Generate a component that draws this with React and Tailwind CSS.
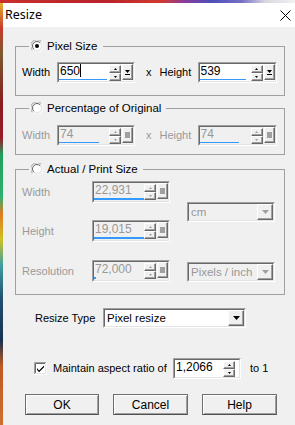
import React from "react";

const raised =
  "bg-[#f0f0f0] border border-t-white border-l-white border-r-[#696969] border-b-[#696969] shadow-[inset_-1px_-1px_0_#a0a0a0]";

function TriDown({ color = "#000", w = 5 }) {
  const h = Math.ceil(w / 2);
  return (
    <svg width={w} height={h} viewBox={`0 0 ${w} ${h}`}>
      <polygon points={`0,0 ${w},0 ${w / 2},${h}`} fill={color} />
    </svg>
  );
}
function TriUp({ color = "#000", w = 5 }) {
  const h = Math.ceil(w / 2);
  return (
    <svg width={w} height={h} viewBox={`0 0 ${w} ${h}`}>
      <polygon points={`0,${h} ${w},${h} ${w / 2},0`} fill={color} />
    </svg>
  );
}

function Spin({ wCls, hCls = "h-[21px]", value, disabled, blueCls, third = true, spinRight = "" }) {
  const tc = disabled ? "text-[#989898]" : "text-black";
  const ac = disabled ? "#a0a0a0" : "#000";
  return (
    <div className={`${wCls} ${hCls} shrink-0 flex border border-t-[#a0a0a0] border-l-[#a0a0a0] border-r-white border-b-white`}>
      <div
        className={`flex-1 flex border border-t-[#696969] border-l-[#696969] border-r-[#e3e3e3] border-b-[#e3e3e3] ${
          disabled ? "bg-[#f0f0f0]" : "bg-white"
        }`}
      >
        <div className="flex-1 flex flex-col min-w-0">
          <div className={`flex-1 pl-[1px] text-[12px] leading-[15px] whitespace-nowrap ${tc}`}>{value}</div>
          <div className={`${blueCls} h-[2px] bg-[#3399ff] mb-[1px]`} />
        </div>
        <div className={`w-[12px] flex flex-col pt-[1px] ${spinRight}`}>
          <div className={`${raised} h-[8px] flex items-center justify-center`}>
            <TriUp color={ac} w={3} />
          </div>
          <div className={`${raised} h-[8px] flex items-center justify-center`}>
            <TriDown color={ac} w={3} />
          </div>
        </div>
        {third && (
          <div className={`${raised} w-[11px] h-[16px] ml-[1px] flex flex-col items-center justify-center gap-[1px]`}>
            {disabled ? (
              <div className="w-[5px] h-[6px] bg-[#a0a0a0]" />
            ) : (
              <>
                <TriDown color="#000" w={5} />
                <div className="w-[5px] h-[1px] bg-black" />
              </>
            )}
          </div>
        )}
      </div>
    </div>
  );
}

function Drop({ wCls, value, disabled }) {
  return (
    <div className={`${wCls} h-[20px] shrink-0 flex border border-t-[#a0a0a0] border-l-[#a0a0a0] border-r-white border-b-white`}>
      <div
        className={`flex-1 flex items-center border border-t-[#696969] border-l-[#696969] border-r-[#e3e3e3] border-b-[#e3e3e3] ${
          disabled ? "bg-[#f0f0f0]" : "bg-white"
        }`}
      >
        <span className={`flex-1 pl-[2px] text-[11.5px] leading-[14px] whitespace-nowrap overflow-hidden ${disabled ? "text-[#989898]" : "text-black"}`}>
          {value}
        </span>
        <div className={`${raised} w-[16px] h-[16px] shrink-0 flex items-center justify-center`}>
          <TriDown color={disabled ? "#a0a0a0" : "#000"} w={7} />
        </div>
      </div>
    </div>
  );
}

function Radio({ checked }) {
  return (
    <svg width="12" height="12" viewBox="0 0 12 12" className="shrink-0">
      <path d="M10.5 1.5 A6 6 0 0 0 1.5 10.5" stroke="#a0a0a0" fill="none" />
      <path d="M1.5 10.5 A6 6 0 0 0 10.5 1.5" stroke="#ffffff" fill="none" />
      <circle cx="6" cy="6" r="4.5" fill="#fff" stroke="#e3e3e3" />
      <path d="M9.2 2.8 A4.5 4.5 0 0 0 2.8 9.2" stroke="#696969" fill="none" />
      {checked && <circle cx="6" cy="6" r="2" fill="#000" />}
    </svg>
  );
}

function Group({ label, checked, mtCls, padCls, children }) {
  return (
    <fieldset className={`${mtCls} border border-[#a0a0a0] ${padCls} min-w-0`}>
      <legend className="ml-[7px] pl-[2px] pr-[5px] leading-[14px]">
        <span className="inline-flex items-center h-[14px] gap-[4px] text-[11.5px] text-black align-top whitespace-nowrap">
          <Radio checked={checked} />
          <span>{label}</span>
        </span>
      </legend>
      {children}
    </fieldset>
  );
}

function Btn({ children, wCls }) {
  return (
    <div
      className={`${wCls} h-[21px] flex items-center justify-center bg-[#f0f0f0] border border-[#6d6d6d] border-b-[#505050] shadow-[inset_1px_1px_0_#fff,inset_-1px_-1px_0_#a0a0a0] text-[12px] text-black`}
    >
      {children}
    </div>
  );
}

export default function App() {
  const lbl = "text-[11px] whitespace-nowrap shrink-0";
  const dis = "text-[#9a9a9a]";
  return (
    <div className="w-[295px] h-[425px] flex flex-col overflow-hidden font-['Liberation_Sans',Arial,sans-serif] select-none">
      <div className="h-[3px] shrink-0 bg-[linear-gradient(90deg,#c9302c_0%,#b8222a_35%,#d23a30_55%,#8d3b9a_62%,#4c4fb8_72%,#7a6fc8_82%,#d8d8e0_90%,#f2f2f2_100%)]" />
      <div className="flex-1 flex min-h-0">
        <div className="w-[3px] shrink-0 bg-[linear-gradient(180deg,#e0b030_0%,#c83a2a_6%,#7a5a30_12%,#8a1a20_24%,#9a1a28_32%,#20a060_36%,#30b070_46%,#e07a20_50%,#d0c020_56%,#40a0a0_62%,#205070_70%,#1a3050_80%,#c05a20_86%,#d07030_100%)]" />
        <div className="flex-1 flex flex-col min-w-0">
          <div className="h-[24px] shrink-0 bg-white flex items-center justify-between">
            <span className="pl-[2px] text-[12.5px] text-black font-['Noto_Sans','Open_Sans',sans-serif]">Resize</span>
            <svg width="11" height="11" viewBox="0 0 11 11" className="mr-[4px]">
              <path d="M0.5 0.5 L10.5 10.5 M10.5 0.5 L0.5 10.5" stroke="#000" strokeWidth="1" />
            </svg>
          </div>
          <div className="flex-1 bg-[#f0f0f0] pl-[12px] pr-[10px] pt-[12px] flex flex-col">
            <Group label="Pixel Size" checked mtCls="" padCls="pt-[9px] pb-[12px] pl-[6px]">
              <div className="flex items-center">
                <span className={`${lbl} w-[35px]`}>Width</span>
                <Spin wCls="w-[78px]" value={<span>650<span className="inline-block w-[1px] h-[13px] bg-black align-[-2px]" /></span>} blueCls="w-[48px]" />
                <span className={`${lbl} ml-[11px]`}>x</span>
                <span className={`${lbl} ml-[8px] w-[38px]`}>Height</span>
                <Spin wCls="w-[79px]" value="539" blueCls="w-[46px]" />
              </div>
            </Group>

            <Group label="Percentage of Original" mtCls="mt-[5px]" padCls="pt-[10px] pb-[8px] pl-[6px]">
              <div className="flex items-center">
                <span className={`${lbl} ${dis} w-[35px]`}>Width</span>
                <Spin wCls="w-[78px]" value="74" disabled blueCls="w-[40px]" />
                <span className={`${lbl} ${dis} ml-[11px]`}>x</span>
                <span className={`${lbl} ${dis} ml-[8px] w-[38px]`}>Height</span>
                <Spin wCls="w-[79px]" value="74" disabled blueCls="w-[39px]" />
              </div>
            </Group>

            <Group label="Actual / Print Size" mtCls="mt-[7px]" padCls="pt-[5px] pb-[12px] pl-[6px]">
              <div className="flex">
                <div className="flex flex-col">
                  <div className="flex items-center">
                    <span className={`${lbl} ${dis} w-[70px]`}>Width</span>
                    <Spin wCls="w-[78px]" hCls="h-[22px]" value="22,931" disabled blueCls="w-[50px]" />
                  </div>
                  <div className="flex items-center mt-[17px]">
                    <span className={`${lbl} ${dis} w-[70px]`}>Height</span>
                    <Spin wCls="w-[78px]" hCls="h-[22px]" value="19,015" disabled blueCls="w-[50px]" />
                  </div>
                  <div className="flex items-center mt-[18px]">
                    <span className={`${lbl} ${dis} w-[70px]`}>Resolution</span>
                    <Spin wCls="w-[78px]" hCls="h-[22px]" value="72,000" disabled blueCls="w-[2px]" />
                  </div>
                </div>
                <div className="flex flex-col ml-[17px]">
                  <div className="mt-[21px]">
                    <Drop wCls="w-[88px]" value="cm" disabled />
                  </div>
                  <div className="mt-[40px]">
                    <Drop wCls="w-[88px]" value="Pixels / inch" disabled />
                  </div>
                </div>
              </div>
            </Group>

            <div className="flex items-center mt-[13px] pl-[20px]">
              <span className={`${lbl} w-[68px]`}>Resize Type</span>
              <Drop wCls="w-[143px]" value="Pixel resize" />
            </div>

            <div className="flex items-center mt-[30px] pl-[19px]">
              <svg width="13" height="13" viewBox="0 0 13 13" className="shrink-0">
                <rect x="0" y="0" width="13" height="13" fill="#fff" />
                <path d="M0.5 12 V0.5 H12" stroke="#a0a0a0" fill="none" />
                <path d="M1.5 11 V1.5 H11" stroke="#696969" fill="none" />
                <path d="M0.5 12.5 H12.5 V0.5" stroke="#fff" fill="none" />
                <path d="M1.5 11.5 H11.5 V1.5" stroke="#e3e3e3" fill="none" />
                <path d="M3 6 L5 8.5 L10 3.5 L10 5.3 L5 10.3 L3 7.8 Z" fill="#000" />
              </svg>
              <span className={`${lbl} ml-[6px] w-[120px]`}>Maintain aspect ratio of</span>
              <Spin wCls="w-[68px]" value="1,2066" blueCls="w-0" third={false} spinRight="mr-[4px]" />
              <span className={`${lbl} ml-[9px]`}>to 1</span>
            </div>

            <div className="flex items-center mt-[15px] pl-[10px]">
              <Btn wCls="w-[74px]">OK</Btn>
              <div className="ml-[14px]">
                <Btn wCls="w-[75px]">Cancel</Btn>
              </div>
              <div className="ml-[14px]">
                <Btn wCls="w-[75px]">Help</Btn>
              </div>
            </div>
          </div>
        </div>
      </div>
    </div>
  );
}
